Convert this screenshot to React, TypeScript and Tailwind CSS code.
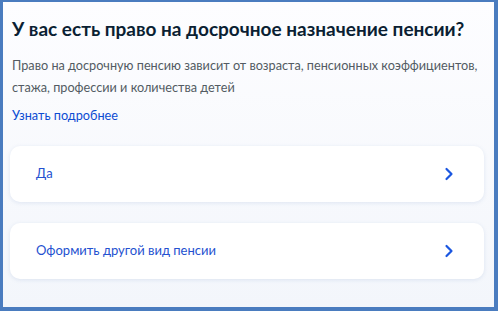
import React from "react";

function Chevron() {
  return (
    <svg width="10" height="14" viewBox="0 0 10 14" fill="none">
      <path d="M2.5 2L7.5 7L2.5 12" stroke="#1a56e0" strokeWidth="2.2" strokeLinecap="round" strokeLinejoin="round" />
    </svg>
  );
}

function Option({ label }: { label: string }) {
  return (
    <div className="flex h-[56px] items-center justify-between rounded-[10px] bg-white pl-[26px] pr-[30px] shadow-[0_1px_4px_rgba(80,110,180,0.14)]">
      <span className="text-[13px] text-[#2451d0]">{label}</span>
      <Chevron />
    </div>
  );
}

export default function App() {
  return (
    <div
      className="h-[311px] w-[498px] overflow-hidden border-t-2 border-l-[3px] border-r-4 border-b-4 border-[#4a7cbf] bg-gradient-to-b from-[#fdfdff] to-[#f3f6fb]"
      style={{ fontFamily: "Lato, 'Noto Sans', sans-serif" }}
    >
      <div className="flex flex-col px-[7px] pt-[15px]">
        <h1 className="pl-[2px] text-[19px] font-bold leading-[24px] text-[#0b1f33]">
          У вас есть право на досрочное назначение пенсии?
        </h1>
        <p className="mt-[13px] pl-[2px] text-[12.7px] leading-[22px] text-[#535b63]">
          Право на досрочную пенсию зависит от возраста, пенсионных коэффициентов, стажа, профессии и количества детей
        </p>
        <a className="mt-[6px] pl-[2px] text-[12.7px] leading-[22px] text-[#0d4cd3]">Узнать подробнее</a>
        <div className="mt-[20px] flex flex-col gap-[21px] pr-[3px]">
          <Option label="Да" />
          <Option label="Оформить другой вид пенсии" />
        </div>
      </div>
    </div>
  );
}
